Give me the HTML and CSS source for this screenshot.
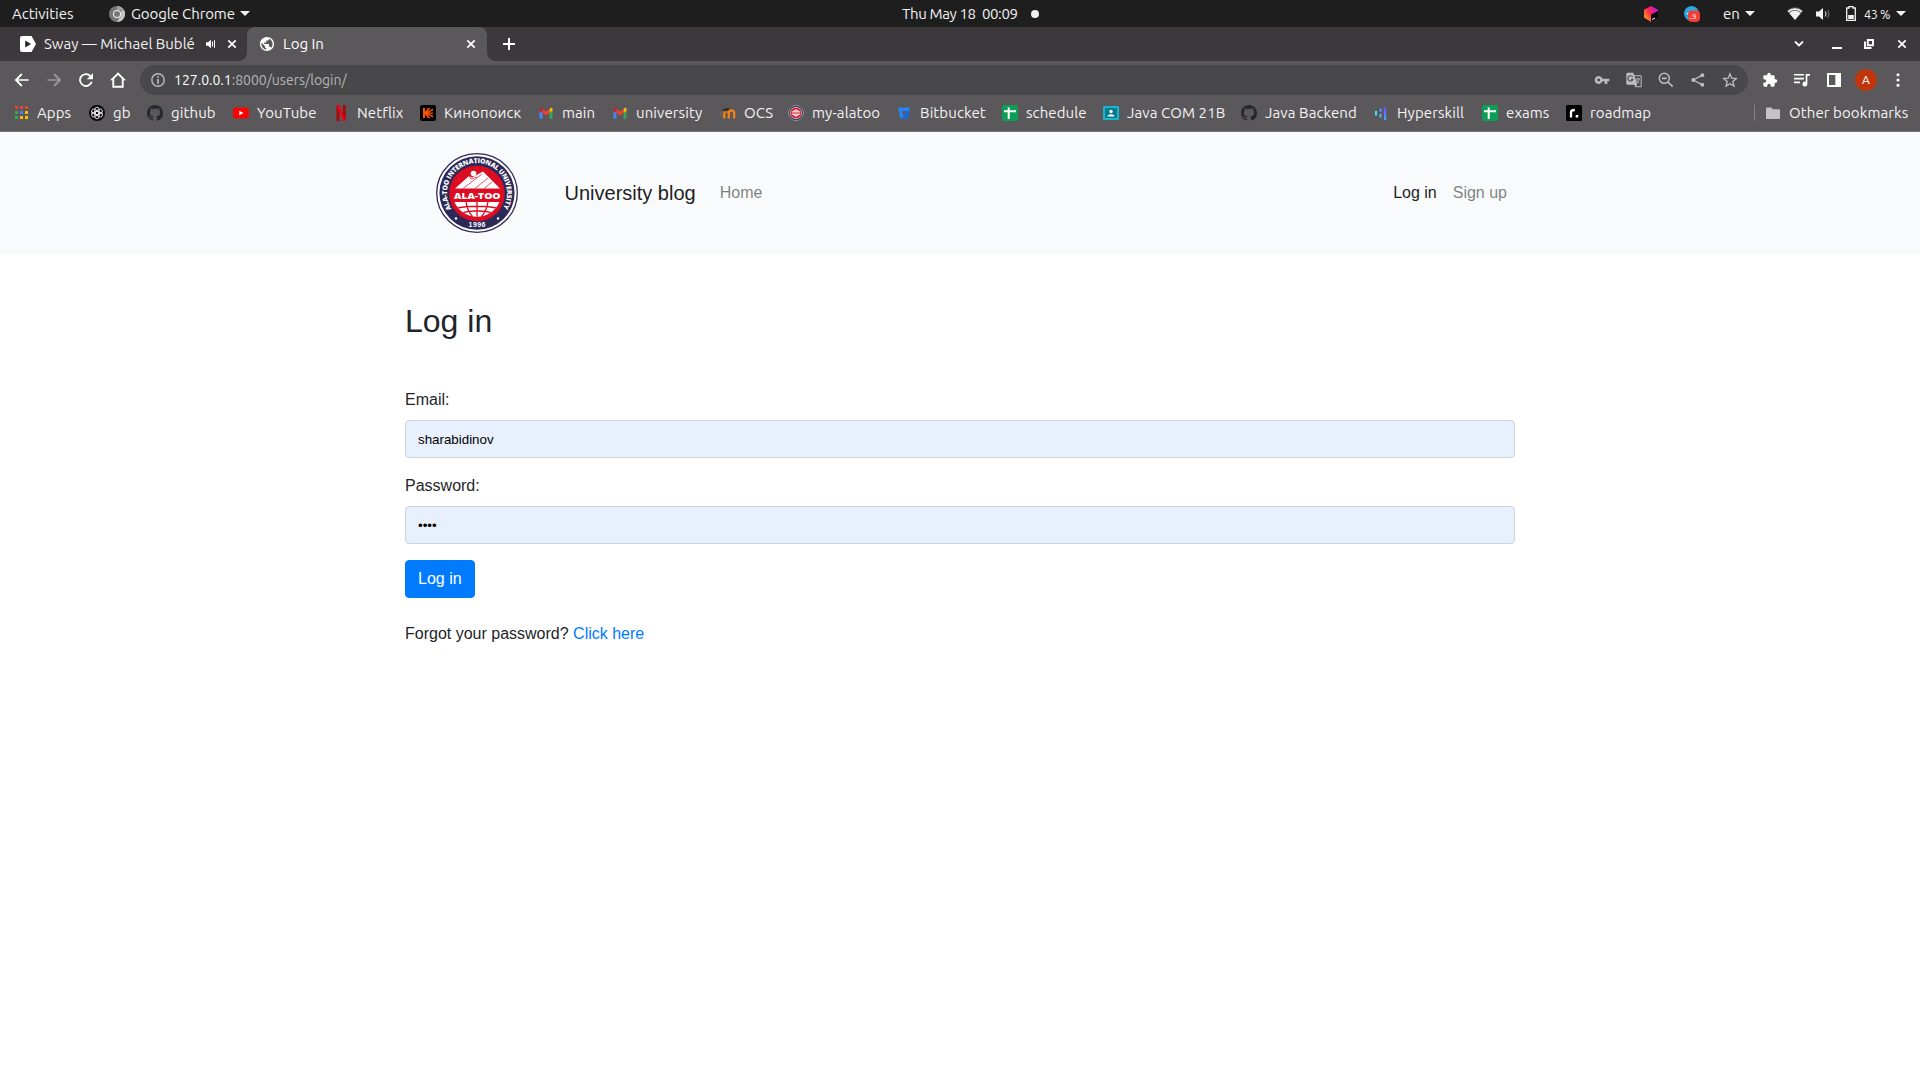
FILE: index.html
```html
<!DOCTYPE html>
<html lang="en">
<head>
<meta charset="utf-8">
<title>Log In</title>
<link rel="stylesheet" href="styles.css">
</head>
<body>
<svg class="defs" aria-hidden="true">
  <symbol id="close" viewBox="0 0 10 10"><path d="M1.300 1.300l7.400 7.400M8.700 1.300L1.300 8.700" stroke="currentColor" stroke-width="1.700"/></symbol>
  <symbol id="caret" viewBox="0 0 10 5"><path d="M0 0h10L5 5z"/></symbol>
  <symbol id="github" viewBox="0 0 16 16"><path fill="#24292f" d="M8 0C3.58 0 0 3.58 0 8c0 3.54 2.29 6.53 5.47 7.59.4.07.55-.17.55-.38 0-.19-.01-.82-.01-1.49-2.01.37-2.53-.49-2.69-.94-.09-.23-.48-.94-.82-1.13-.28-.15-.68-.52-.01-.53.63-.01 1.08.58 1.23.82.72 1.21 1.87.87 2.33.66.07-.52.28-.87.51-1.07-1.78-.2-3.64-.89-3.64-3.95 0-.87.31-1.59.82-2.15-.08-.2-.36-1.02.08-2.12 0 0 .67-.21 2.2.82.64-.18 1.32-.27 2-.27s1.36.09 2 .27c1.53-1.04 2.2-.82 2.2-.82.44 1.1.16 1.92.08 2.12.51.56.82 1.27.82 2.15 0 3.07-1.87 3.75-3.65 3.95.29.25.54.73.54 1.48 0 1.07-.01 1.93-.01 2.2 0 .21.15.46.55.38A8.01 8.01 0 0 0 16 8c0-4.42-3.58-8-8-8z"/></symbol>
  <symbol id="gmail" viewBox="0 0 16 16"><path fill="#4285f4" d="M1.500 5.500l3 2.200v6H2.400a.9.900 0 0 1-.9-.9z"/><path fill="#34a853" d="M14.500 5.500l-3 2.200v6h2.100a.9.900 0 0 0 .9-.9z"/><path fill="#fbbc04" d="M11.500 3.900l1-.8c.9-.7 2-.1 2 .9v1.700l-3 2.300z"/><path fill="#c5221f" d="M4.500 3.900l-1-.8c-.9-.7-2-.1-2 .9v1.700l3 2.300z"/><path fill="#ea4335" d="M4.500 3.900L8 6.500l3.500-2.600V8L8 10.600 4.500 8z"/></symbol>
  <symbol id="sheet" viewBox="0 0 16 16"><rect width="16" height="16" rx="1.500" fill="#0f9d58"/><path d="M2 6.200h12M6.700 2.500V14" stroke="#fff" stroke-width="2"/></symbol>
</svg>

<header class="desktop-bar">
  <span class="activities">Activities</span>
  <svg class="app-icon" viewBox="0 0 16 16"><circle cx="8" cy="8" r="8" fill="#777"/><path d="M8 0a8 8 0 0 1 7 4H8z" fill="#a2a2a2"/><path d="M15 4a8 8 0 0 1-7 12l3.500-6L12 5z" fill="#c4c4c4"/><circle cx="8" cy="8" r="4" fill="#eee"/><circle cx="8" cy="8" r="3" fill="#777"/></svg>
  <span class="app-name">Google Chrome</span>
  <svg class="caret app-caret"><use href="#caret"/></svg>
  <span class="clock">Thu May 18&nbsp; 00:09</span>
  <i class="dot"></i>
  <svg class="tray-toolbox" viewBox="0 0 16 16"><defs><linearGradient id="tb" x1="0" y1=".7" x2="1" y2="0"><stop stop-color="#ff9419"/><stop offset=".45" stop-color="#ff2057"/><stop offset="1" stop-color="#9a20ff"/></linearGradient></defs><path d="M8 0l7 3.800v7.700L8 16l-7-4.500V3.800z" fill="url(#tb)"/><path d="M8 8.500L15 5v6.500L8 16z" fill="#080808"/><path d="M9 13.500l3-1.500" stroke="#fff"/></svg>
  <svg class="tray-telegram" viewBox="0 0 16 16"><circle cx="7.500" cy="7.500" r="7.500" fill="#2ca5e0"/><path d="M2 7.500l8-3-2 5z" fill="#fff"/><rect x="4" y="4.500" width="12" height="11.500" rx="4" fill="#f23c34"/><text x="5" y="13" class="tray-count">..9</text></svg>
  <span class="lang">en</span>
  <svg class="caret lang-caret"><use href="#caret"/></svg>
  <svg class="wifi" viewBox="0 0 16 14"><path d="M.6 4.200a10.500 10.500 0 0 1 14.800 0L14.200 5.600a9 9 0 0 0-12.400 0z"/><path d="M2.300 6.200a8 8 0 0 1 11.400 0L8 13z"/><path d="M0 3.700C4.500-.8 11.500-.8 16 3.700L8 13z" opacity=".28"/></svg>
  <svg class="volume" viewBox="0 0 16 14"><path d="M0 4.500h3L7 1v12L3 9.500H0z"/><path d="M9.300 4.500q1.700 2.500 0 5" fill="none" stroke="#f2f2f2"/><path d="M11.800 3q2.700 4 0 8" fill="none" stroke="#777"/></svg>
  <svg class="battery" viewBox="0 0 10 15"><path d="M3 .7h4v1.300h2.300v12.300H.7V2H3z" fill="none" stroke="#f2f2f2" stroke-width="1.300"/><path d="M2.200 9h5.600v4H2.200z"/></svg>
  <span class="percent">43 %</span>
  <svg class="caret power-caret"><use href="#caret"/></svg>
</header>

<section class="tab-strip">
  <div class="tab tab-back">
    <svg class="fav" viewBox="0 0 16 16"><path d="M2 0h9.500L16 8l-4.500 8H2a2 2 0 0 1-2-2V2a2 2 0 0 1 2-2z" fill="#fff"/><path d="M5.200 4.500L11 8l-5.800 3.500z" fill="#252525"/></svg>
    <span class="tab-title">Sway — Michael Bublé</span>
    <svg class="speaker" viewBox="0 0 10 10"><path d="M0 3.200h2L5 .8v8.400L2 6.800H0z"/><path d="M6.500 2.500v5M8.500 1.200v7.600" stroke="currentColor"/></svg>
    <svg class="close"><use href="#close"/></svg>
  </div>
  <div class="tab tab-active">
    <svg class="fav fav-globe" viewBox="2 2 20 20"><path d="M12 2C6.480 2 2 6.480 2 12s4.480 10 10 10 10-4.480 10-10S17.520 2 12 2zm-1 17.930c-3.950-.49-7-3.850-7-7.930 0-.62.080-1.210.210-1.790L9 15v1c0 1.100.9 2 2 2v1.930zm6.900-2.540c-.26-.81-1-1.390-1.900-1.390h-1v-3c0-.55-.45-1-1-1H8v-2h2c.55 0 1-.45 1-1V7h2c1.100 0 2-.9 2-2v-.41c2.930 1.190 5 4.060 5 7.410 0 2.080-.8 3.970-2.100 5.390z"/></svg>
    <span class="tab-title">Log In</span>
    <svg class="close"><use href="#close"/></svg>
  </div>
  <svg class="new-tab" viewBox="0 0 12 12"><path d="M6 0v12M0 6h12" stroke="currentColor" stroke-width="2"/></svg>
  <svg class="win-menu" viewBox="0 0 10 6"><path d="M1 .5l4 4 4-4" fill="none" stroke="currentColor" stroke-width="1.800"/></svg>
  <i class="win-min"></i>
  <svg class="win-restore" viewBox="0 0 10 10"><path d="M3.800 1h5.200v5.200H3.800zM1 2.500V9h6.500" fill="none" stroke="currentColor" stroke-width="1.900"/></svg>
  <svg class="win-close"><use href="#close"/></svg>
</section>

<section class="toolbar">
  <svg class="tool" viewBox="0 0 24 24"><path d="M22 10.700H6.100l6.600-6.700L10.800 2 1 12l9.800 10 1.900-2-6.600-6.700H22z"/></svg>
  <svg class="tool tool-dim" viewBox="0 0 24 24"><path d="M2 10.700h15.900l-6.600-6.700L13.200 2 23 12l-9.800 10-1.900-2 6.600-6.700H2z"/></svg>
  <svg class="tool" viewBox="0 0 24 24"><path d="M19.300 4.700A10.300 10.300 0 1 0 22 14.600h-2.900A7.600 7.600 0 1 1 17.400 6.600L13.200 10.800H22.500V1.500z"/></svg>
  <svg class="tool" viewBox="0 0 24 24"><path fill-rule="evenodd" d="M12 .5L0 12.500h3.500v11h17v-11H24zM12 4.400l5.700 5.700v10.600H6.300V10.100z"/></svg>
  <div class="omnibox">
    <svg class="info" viewBox="0 0 14 14"><circle cx="7" cy="7" r="6.200" fill="none" stroke="currentColor" stroke-width="1.400"/><path d="M7 3.300v1.500M7 6v4.700" stroke="currentColor" stroke-width="1.700"/></svg>
    <span class="url"><b>127.0.0.1</b>:8000/users/login/</span>
    <svg class="tool" viewBox="0 0 24 24"><path fill-rule="evenodd" d="M12.650 10A6 6 0 1 0 12.650 14H16v4h4v-4h3v-4zM7 14.200a2.200 2.200 0 1 1 0-4.400 2.200 2.200 0 0 1 0 4.400z"/></svg>
    <svg class="tool" viewBox="0 0 24 24"><path fill-rule="evenodd" d="M2 1h9l1.200 4H22a1.500 1.500 0 0 1 1.500 1.500v15A1.500 1.500 0 0 1 22 23h-8l-1.500-4H2a1.500 1.500 0 0 1-1.500-1.500v-15A1.500 1.500 0 0 1 2 1zm11 5.500l4 12.500-2.500 2.500H22v-15z"/><path d="M10 7.200A4 4 0 1 0 10.500 11H7.500" fill="none" stroke="#48484a" stroke-width="1.700"/><path d="M14.500 10.500H21M17.700 9v1.500M20 10.700c-.8 3-2.500 4.800-4.200 6M15.500 12c1 2.300 2.500 3.500 4.500 5" fill="none" stroke="currentColor" stroke-width="1.400"/></svg>
    <svg class="tool" viewBox="0 0 24 24"><circle cx="9.500" cy="9.500" r="7.500" fill="none" stroke="currentColor" stroke-width="2.200"/><path d="M15 15l7 7M6 9.500h7" stroke="currentColor" stroke-width="2.400"/></svg>
    <svg class="tool" viewBox="0 0 24 24"><path d="M18.500 4.800L5 12l13.500 7.200" fill="none" stroke="currentColor" stroke-width="2"/><circle cx="18.500" cy="4.800" r="2.900"/><circle cx="5" cy="12" r="2.900"/><circle cx="18.500" cy="19.200" r="2.900"/></svg>
    <svg class="tool" viewBox="0 0 24 24"><path d="M12 3l2.700 6.300 6.800.6-5.200 4.500 1.600 6.700L12 17.500l-5.900 3.600 1.600-6.700-5.200-4.500 6.800-.6z" fill="none" stroke="currentColor" stroke-width="2"/></svg>
  </div>
  <div class="actions">
    <svg class="tool" viewBox="0 0 24 24"><path d="M20.500 11H19V7a2 2 0 0 0-2-2h-4V3.500a2.500 2.500 0 0 0-5 0V5H4a2 2 0 0 0-2 2v3.800h1.500a2.700 2.700 0 0 1 0 5.400H2V20a2 2 0 0 0 2 2h3.800v-1.500a2.700 2.700 0 0 1 5.400 0V22H17a2 2 0 0 0 2-2v-4h1.500a2.500 2.500 0 0 0 0-5z"/></svg>
    <svg class="tool" viewBox="0 0 24 24"><path d="M0 3h15v2.400H0zM0 8.700h15v2.400H0zM0 14.400h9v2.400H0zM17.500 3H24v2.500h-3.900V18a3.700 3.700 0 1 1-2.600-3.500z"/></svg>
    <svg class="tool" viewBox="0 0 24 24"><path fill-rule="evenodd" d="M1.500 1.500h21v21h-21zm3 3v15h9.500v-15z"/></svg>
    <span class="avatar">A</span>
    <svg class="tool" viewBox="0 0 24 24"><circle cx="12" cy="4" r="2.300"/><circle cx="12" cy="12" r="2.300"/><circle cx="12" cy="20" r="2.300"/></svg>
  </div>
</section>

<nav class="bookmarks">
  <a class="bm bm-apps"><svg viewBox="0 0 16 16"><path fill="#ea4335" d="M2 1h3v3H2zM7 1h3v3H7zM12 1h3v3h-3z"/><path fill="#34a853" d="M2 6h3v3H2zM2 11h3v3H2z"/><path fill="#4285f4" d="M7 6h3v3H7z"/><path fill="#fbbc04" d="M12 6h3v3h-3zM7 11h3v3H7zM12 11h3v3h-3z"/></svg>Apps</a>
  <a class="bm bm-gb"><svg viewBox="0 0 16 16"><circle cx="8" cy="8" r="8" fill="#050505"/><g fill="none" stroke="#e8e8e8" stroke-width=".9"><rect x="5.800" y="2.200" width="4.400" height="7.500" rx="2.200"/><rect x="5.800" y="2.200" width="4.400" height="7.500" rx="2.200" transform="rotate(60 8 8)"/><rect x="5.800" y="2.200" width="4.400" height="7.500" rx="2.200" transform="rotate(120 8 8)"/><rect x="5.800" y="2.200" width="4.400" height="7.500" rx="2.200" transform="rotate(180 8 8)"/><rect x="5.800" y="2.200" width="4.400" height="7.500" rx="2.200" transform="rotate(240 8 8)"/><rect x="5.800" y="2.200" width="4.400" height="7.500" rx="2.200" transform="rotate(300 8 8)"/></g></svg>gb</a>
  <a class="bm bm-github"><svg><use href="#github"/></svg>github</a>
  <a class="bm bm-youtube"><svg viewBox="0 0 16 16"><rect x=".2" y="2.500" width="15.600" height="11" rx="2.500" fill="#f00"/><path d="M6.300 5.700L10.500 8l-4.200 2.300z" fill="#fff"/></svg>YouTube</a>
  <a class="bm bm-netflix"><svg viewBox="0 0 16 16"><path d="M3.500 0h3v16l-3 .2zM9.800 0h3v16l-3-.2z" fill="#a50a12"/><path d="M3.500 0h3l6.300 16-3-.2z" fill="#e50914"/></svg>Netflix</a>
  <a class="bm bm-kino"><svg viewBox="0 0 16 16"><rect width="16" height="16" rx="2" fill="#000"/><path d="M3 3h2v3.700L8.200 3h2.200L7.500 6.700 13 3.500v2L8.500 7.400H13v1.400H8.500L13 10.500v2L7.500 9.400l2.900 3.700H8.200L5 9.400V13H3z" fill="#f50"/></svg>Кинопоиск</a>
  <a class="bm bm-main"><svg><use href="#gmail"/></svg>main</a>
  <a class="bm bm-univ"><svg><use href="#gmail"/></svg>university</a>
  <a class="bm bm-ocs"><svg viewBox="0 0 16 16"><path d="M4.200 13.500V8.800a2.300 2.300 0 0 1 4.600 0V13.500M8.800 13.500V8a2.700 2.700 0 0 1 5.400 0V13.500" fill="none" stroke="#f98012" stroke-width="2.200"/><path d="M1 5.500L6 2.800l4 .7-3 3z" fill="#333"/><path d="M1 5.500V12" stroke="#777" stroke-width=".6"/></svg>OCS</a>
  <a class="bm bm-alatoo"><svg viewBox="0 0 16 16"><circle cx="8" cy="8" r="7.600" fill="#34345c" stroke="#aaa" stroke-width=".7"/><circle cx="8" cy="8" r="5.700" fill="#d81a2c" stroke="#fff" stroke-width=".6"/><path d="M4 6.500L8 4l4 2.500v3L8 12 4 9.500z" fill="#f2c7cb"/><path d="M3.500 8h9" stroke="#cf3542"/></svg>my-alatoo</a>
  <a class="bm bm-bitbucket"><svg viewBox="0 0 16 16"><path fill-rule="evenodd" d="M2.300 2.500h11.500L12.100 13.500H4.300zM6 6l.6 4h3l.6-4z" fill="#2684ff"/><path d="M10.200 6h3l-1.100 7.500H4.300L9.600 10z" fill="#1765dc"/></svg>Bitbucket</a>
  <a class="bm bm-schedule"><svg><use href="#sheet"/></svg>schedule</a>
  <a class="bm bm-com"><svg viewBox="0 0 16 16"><rect y="1" width="16" height="14" rx="1" fill="#18b4cb"/><path d="M2 3h12v10H2z" fill="#007c91"/><circle cx="8" cy="6.500" r="1.700" fill="#fff"/><path d="M4.500 11.500c0-3 7-3 7 0z" fill="#fff"/></svg>Java COM 21B</a>
  <a class="bm bm-backend"><svg><use href="#github"/></svg>Java Backend</a>
  <a class="bm bm-hyper"><svg viewBox="0 0 16 16"><defs><linearGradient id="hy" x2="0" y2="1"><stop stop-color="#704dff"/><stop offset="1" stop-color="#42a5ff"/></linearGradient></defs><path d="M11 2h2.200v13H11z" fill="url(#hy)"/><path d="M6.500 3.500h2V7h-2z" fill="#4f8dff"/><path d="M6.500 9h2v3.500h-2z" fill="#45b8ff"/><path d="M2 6h2v4.500H2z" fill="#45e2f5"/></svg>Hyperskill</a>
  <a class="bm bm-exams"><svg><use href="#sheet"/></svg>exams</a>
  <a class="bm bm-roadmap"><svg viewBox="0 0 16 16"><rect width="16" height="16" rx="1.500" fill="#000"/><path d="M5 12.500V7.200Q5 5 8.800 5" fill="none" stroke="#fff" stroke-width="2.300"/><rect x="9.700" y="10" width="2.500" height="2.500" fill="#fff"/></svg>roadmap</a>
  <a class="bm bm-other"><svg viewBox="0 0 16 16"><path d="M1 3.500a1 1 0 0 1 1-1h4.300l1.500 1.700H14a1 1 0 0 1 1 1V13a1 1 0 0 1-1 1H2a1 1 0 0 1-1-1z" fill="#c3c3c3"/></svg>Other bookmarks</a>
</nav>

<div class="site-nav">
  <div class="container nav-inner">
    <svg class="logo" viewBox="-41 -40 82 80">
      <defs>
        <path id="ring" d="M-25.400 16A30 30 0 1 1 25.400 16"/>
        <clipPath id="globe"><path d="M-22.500 9H22.500A24.500 24.500 0 0 1-22.500 9z"/></clipPath>
      </defs>
      <ellipse rx="40.300" ry="39.300" fill="#fff" stroke="#2c2857" stroke-width="1.300"/>
      <ellipse rx="37.600" ry="36.700" fill="#2c2857"/>
      <circle r="27.800" cy=".5" fill="#dc0c23"/>
      <text class="logo-ring"><textPath href="#ring" textLength="126">ALA-TOO INTERNATIONAL UNIVERSITY</textPath></text>
      <circle cx="-3.500" cy="-19.500" r="2.800" fill="#fff"/>
      <path d="M-22-4.500L-8-17l3 1.500L6-21.500 23-4.500z" fill="#fff"/>
      <path d="M-14-4.500L5-19M-2-4.500L11-15M7-4.500L15-11M-8-17l2 3 6-2" fill="none" stroke="#dc0c23" stroke-width=".7"/>
      <text class="logo-name" x="-23" y="6.200" textLength="46.500" lengthAdjust="spacingAndGlyphs">ALA-TOO</text>
      <path d="M-22.500 9H22.500A24.500 24.500 0 0 1-22.500 9z" fill="#fff"/>
      <g clip-path="url(#globe)" fill="none" stroke="#dc0c23" stroke-width="1.300"><path d="M0 8V26M-11 8Q-10 19-2 26M11 8Q10 19 2 26M-23 15.500Q0 11 23 15.500M-18 20.500Q0 15 18 20.500"/></g>
      <text class="logo-year" x="-8.500" y="34.300" textLength="17">1996</text>
      <circle cx="-21" cy="25.500" r="1.200" fill="#fff"/><circle cx="21" cy="25.500" r="1.200" fill="#fff"/>
    </svg>
    <a class="brand">University blog</a>
    <a class="nav-link">Home</a>
    <div class="nav-right"><a class="nav-link nav-current">Log in</a><a class="nav-link">Sign up</a></div>
  </div>
</div>

<main class="container">
  <h2>Log in</h2>
  <form>
    <label for="email">Email:</label>
    <input id="email" type="text" value="sharabidinov">
    <label for="password">Password:</label>
    <input id="password" type="password" value="1234">
    <button type="button">Log in</button>
  </form>
  <p class="forgot">Forgot your password? <a>Click here</a></p>
</main>
</body>
</html>
```
FILE: styles.css
```css
* { box-sizing: border-box; }
body { margin: 0; background: #fff; color: #212529; font: 16px/24px "Liberation Sans", Arial, sans-serif; height: 1080px; overflow: hidden; }
.defs { position: absolute; width: 0; height: 0; }
svg { flex: none; display: block; fill: currentColor; }

/* desktop bar */
.desktop-bar, .tab-strip, .toolbar, .bookmarks { display: flex; align-items: center; font-family: Ubuntu, "Noto Sans", sans-serif; white-space: nowrap; }
.desktop-bar { height: 27px; background: #1e1e1e; color: #f2f2f2; font-size: 15px; line-height: 26px; }
.desktop-bar > * { flex: none; }
.activities { width: 62px; margin-left: 12px; }
.app-icon { width: 16px; height: 16px; margin-left: 35px; }
.app-name { width: 104px; margin-left: 6px; letter-spacing: -.1px; }
.caret { width: 10px; height: 5px; }
.app-caret { margin-left: 5px; }
.clock { width: 116px; margin-left: 652px; letter-spacing: -.35px; }
.dot { width: 8px; height: 8px; border-radius: 50%; background: #f2f2f2; margin-left: 13px; }
.tray-toolbox { width: 16px; height: 16px; margin-left: 604px; }
.tray-telegram { width: 16px; height: 16px; margin-left: 25px; }
.tray-count { font: 6.5px "Noto Sans", sans-serif; fill: #fff; }
.lang { width: 17px; margin-left: 23px; }
.lang-caret { margin-left: 5px; }
.wifi { width: 16px; height: 14px; margin-left: 32px; }
.volume { width: 16px; height: 14px; margin-left: 13px; }
.battery { width: 10px; height: 15px; margin-left: 14px; }
.percent { width: 27px; margin-left: 8px; font-size: 12.5px; letter-spacing: -.3px; }
.power-caret { margin-left: 5px; }

/* tabs */
.tab-strip { height: 34px; background: #3c383b; color: #fff; font-size: 15px; }
.tab-strip > * { flex: none; }
.tab { display: flex; align-items: center; height: 34px; }
.tab-back { width: 247px; padding-left: 20px; }
.tab-back .tab-title { width: 152px; margin-left: 8px; color: #f1f1f1; }
.fav { width: 16px; height: 16px; }
.speaker { width: 10px; height: 10px; margin-left: 10px; }
.close { width: 10px; height: 10px; }
.tab-back .close { margin-left: 11px; }
.tab-active { position: relative; width: 240px; padding-left: 13px; background: #5b585b; border-radius: 8px 8px 0 0; }
.tab-active::before, .tab-active::after { content: ""; position: absolute; bottom: 0; width: 8px; height: 8px; }
.tab-active::before { left: -8px; background: radial-gradient(circle at 0 0, #3c383b 7.5px, #5b585b 8px); }
.tab-active::after { right: -8px; background: radial-gradient(circle at 100% 0, #3c383b 7.5px, #5b585b 8px); }
.fav-globe { width: 14px; height: 14px; }
.tab-active .tab-title { width: 42px; margin-left: 9px; }
.tab-active .close { margin-left: 141px; }
.new-tab { width: 12px; height: 12px; margin-left: 16px; }
.win-menu { width: 10px; height: 6px; margin-left: 1279px; }
.win-min { width: 10px; height: 2px; background: #fff; margin: 8px 0 0 28px; }
.win-restore { width: 10px; height: 10px; margin-left: 22px; }
.win-close { width: 10px; height: 10px; margin-left: 23px; }

/* toolbar */
.toolbar { height: 38px; padding-left: 6px; background: #5b585b; color: #fff; }
.tool { width: 16px; height: 16px; margin: 0 8px; }
.tool-dim { color: #9b999b; }
.omnibox { display: flex; align-items: center; flex: none; width: 1608px; height: 30px; margin-left: 6px; padding: 0 2px 0 11px; border-radius: 15px; background: #48484a; color: #bdbdbd; }
.info { width: 14px; height: 14px; }
.url { flex: 1; margin-left: 9px; font-size: 14px; color: #b5b5b6; }
.url b { font-weight: 400; color: #fff; }
.actions { display: flex; align-items: center; margin-left: 6px; }
.avatar { width: 22px; height: 22px; margin: 0 5px; border-radius: 50%; background: #bf360c; font-size: 12px; line-height: 22px; text-align: center; }

/* bookmarks */
.bookmarks { height: 33px; padding: 0 0 5px 13px; background: #5b585b; border-bottom: 1px solid #767376; color: #f3f3f3; font-size: 15px; letter-spacing: .1px; }
.bm { display: flex; align-items: center; flex: none; }
.bm svg { width: 16px; height: 16px; margin-right: 8px; }
.bm-apps { width: 76px; }
.bm-gb { width: 58px; }
.bm-github { width: 86px; }
.bm-youtube { width: 100px; }
.bm-netflix { width: 87px; }
.bm-kino { width: 118px; }
.bm-main { width: 74px; }
.bm-univ { width: 108px; }
.bm-ocs { width: 68px; }
.bm-alatoo { width: 108px; }
.bm-bitbucket { width: 106px; }
.bm-schedule { width: 101px; }
.bm-com { width: 138px; }
.bm-backend { width: 132px; }
.bm-hyper { width: 109px; }
.bm-exams { width: 84px; }
.bm-roadmap { width: 188px; }
.bm-other { border-left: 1px solid #858385; padding-left: 10px; height: 16px; }

/* page */
.container { width: 1140px; margin: 0 auto; padding: 0 15px; }
.site-nav { height: 122px; background: #f8fafc; }
.nav-inner { display: flex; align-items: center; height: 122px; padding: 0 23px 0 46px; }
.logo { width: 82px; height: 80px; }
.logo-ring { font: 800 6.800px "Open Sans", sans-serif; fill: #fff; }
.logo-name { font: 800 9px "Open Sans", sans-serif; fill: #fff; }
.logo-year { font: 700 7px "Liberation Sans", sans-serif; fill: #fff; }
.brand { margin: 0 24px 0 46.500px; font-size: 20px; line-height: 30px; color: rgba(0, 0, 0, .9); }
.nav-link { color: rgba(0, 0, 0, .5); }
.nav-current { color: rgba(0, 0, 0, .9); }
.nav-right { display: flex; gap: 16px; margin-left: auto; }
h2 { margin: 48px 0 0; font-size: 32px; font-weight: 500; line-height: 38px; }
form { margin-top: 48px; }
label { display: block; margin-bottom: 8px; }
input { display: block; width: 100%; height: 38px; margin-bottom: 16px; padding: 6px 12px; border: 1px solid #ced4da; border-radius: 4px; background: #e8f0fe; color: #000; font: 13.333px "Liberation Sans", Arial, sans-serif; }
button { display: block; height: 38px; padding: 6px 12px; border: 1px solid #007bff; border-radius: 4px; background: #007bff; color: #fff; font: 16px/24px "Liberation Sans", Arial, sans-serif; }
.forgot { margin: 24px 0 0; }
.forgot a { color: #007bff; }
```
